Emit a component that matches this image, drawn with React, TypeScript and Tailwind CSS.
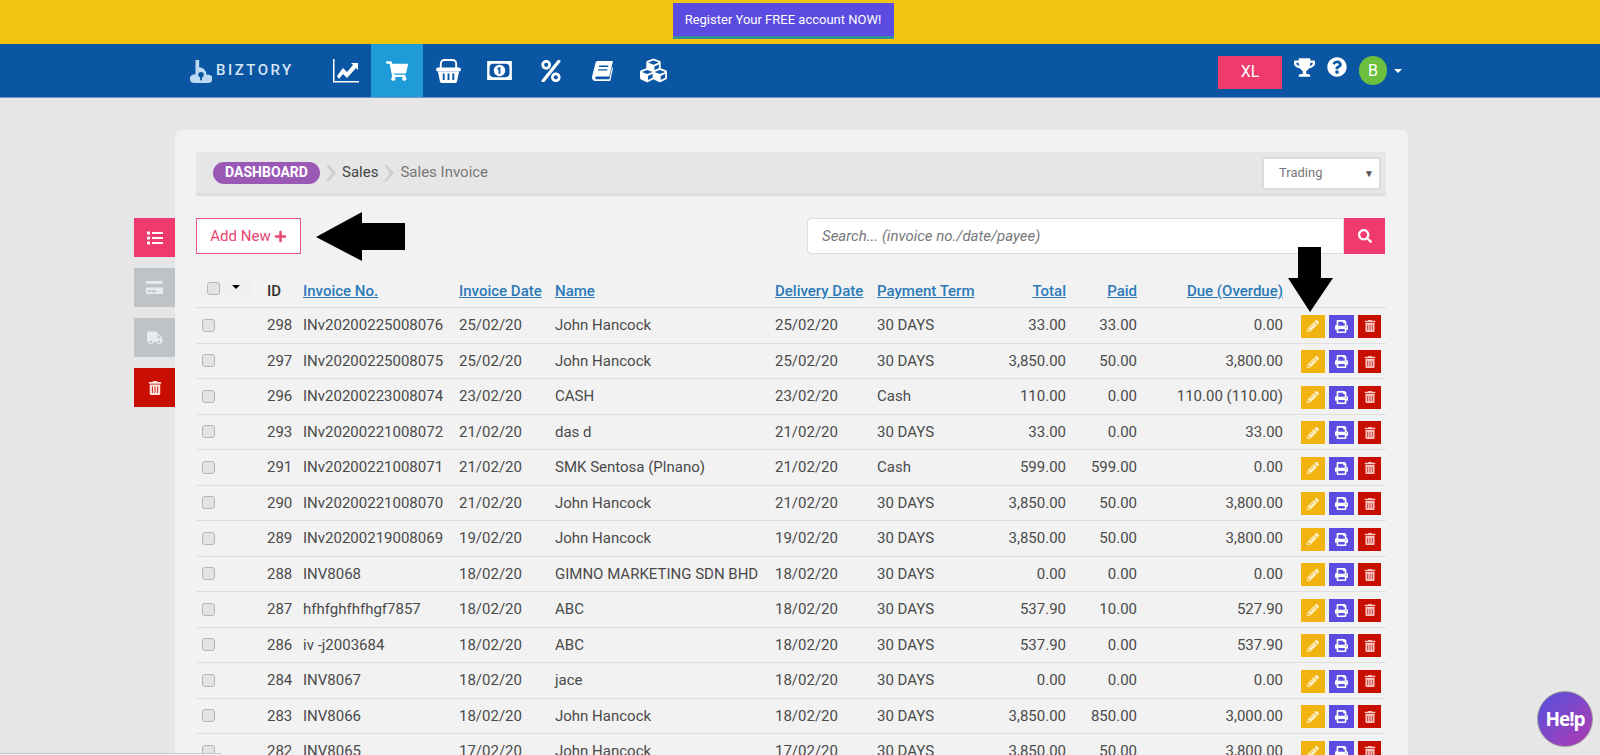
import React from 'react';
import {
  FaCreditCard,
  FaCubes,
  FaList,
  FaPencilAlt,
  FaPercent,
  FaPlus,
  FaPrint,
  FaQuestionCircle,
  FaSearch,
  FaShoppingCart,
  FaTrashAlt,
  FaTrophy,
  FaTruck,
} from 'react-icons/fa';

const rows = [
  ['298', 'INv20200225008076', '25/02/20', 'John Hancock', '25/02/20', '30 DAYS', '33.00', '33.00', '0.00'],
  ['297', 'INv20200225008075', '25/02/20', 'John Hancock', '25/02/20', '30 DAYS', '3,850.00', '50.00', '3,800.00'],
  ['296', 'INv20200223008074', '23/02/20', 'CASH', '23/02/20', 'Cash', '110.00', '0.00', '110.00 (110.00)'],
  ['293', 'INv20200221008072', '21/02/20', 'das d', '21/02/20', '30 DAYS', '33.00', '0.00', '33.00'],
  ['291', 'INv20200221008071', '21/02/20', 'SMK Sentosa (Plnano)', '21/02/20', 'Cash', '599.00', '599.00', '0.00'],
  ['290', 'INv20200221008070', '21/02/20', 'John Hancock', '21/02/20', '30 DAYS', '3,850.00', '50.00', '3,800.00'],
  ['289', 'INv20200219008069', '19/02/20', 'John Hancock', '19/02/20', '30 DAYS', '3,850.00', '50.00', '3,800.00'],
  ['288', 'INV8068', '18/02/20', 'GIMNO MARKETING SDN BHD', '18/02/20', '30 DAYS', '0.00', '0.00', '0.00'],
  ['287', 'hfhfghfhfhgf7857', '18/02/20', 'ABC', '18/02/20', '30 DAYS', '537.90', '10.00', '527.90'],
  ['286', 'iv -j2003684', '18/02/20', 'ABC', '18/02/20', '30 DAYS', '537.90', '0.00', '537.90'],
  ['284', 'INV8067', '18/02/20', 'jace', '18/02/20', '30 DAYS', '0.00', '0.00', '0.00'],
  ['283', 'INV8066', '18/02/20', 'John Hancock', '18/02/20', '30 DAYS', '3,850.00', '850.00', '3,000.00'],
  ['282', 'INV8065', '17/02/20', 'John Hancock', '17/02/20', '30 DAYS', '3,850.00', '50.00', '3,800.00'],
];

const gridCols = 'grid grid-cols-[66px_36px_156px_96px_220px_102px_128px_71px_71px_146px_98px]';

function Checkbox() {
  return <span className="block w-[13px] h-[13px] rounded-[3px] bg-[#e4e4e4] border border-[#b5b5b5]" />;
}

function SortLink({ label, right }: { label: string; right?: boolean }) {
  return (
    <a className={`text-[#2b7ab8] font-medium underline ${right ? 'text-right pr-[5px]' : 'pl-[5px]'}`}>{label}</a>
  );
}

function Chevron() {
  return (
    <svg viewBox="0 0 10 16" className="w-[10px] h-[16px] mx-[6px] text-[#cfcfcf]" fill="currentColor">
      <path d="M0 0h3l7 8-7 8H0l6-8z" />
    </svg>
  );
}

function LogoMark() {
  return (
    <svg viewBox="0 0 24 26" className="w-[22px] h-[24px] text-[#bcd9f2]" fill="currentColor">
      <path d="M6 1h4v8a8 8 0 0 1 8 8h2a4.500 4.500 0 0 1 0 9H4a4.500 4.500 0 0 1-1-8.800l3-1z" />
      <circle cx="12" cy="17" r="3" fill="#0a56a3" />
      <path d="M11 18h2v5h-2z" fill="#0a56a3" />
    </svg>
  );
}

function ChartIcon() {
  return (
    <svg viewBox="0 0 26 24" className="w-[26px] h-[24px]" fill="currentColor">
      <path d="M0 0h1.500v22H26v1.500H0z" />
      <path d="M4 17l6-8 4 4 6-7-2-2h7v7l-2-2-9 10-4-4-4 5z" />
    </svg>
  );
}

function BasketIcon() {
  return (
    <svg viewBox="0 0 26 26" className="w-[25px] h-[25px]" fill="currentColor">
      <path d="M5 11V6a4 4 0 0 1 4-4h8a4 4 0 0 1 4 4v5" fill="none" stroke="currentColor" strokeWidth="2" />
      <rect x="0" y="10" width="26" height="4" rx="2" />
      <path d="M2 14h22l-2 10a2 2 0 0 1-2 2H6a2 2 0 0 1-2-2z" />
      <path d="M7 16h2v7H7zM12 16h2v7h-2zM17 16h2v7h-2z" fill="#0a56a3" />
    </svg>
  );
}

function MoneyIcon() {
  return (
    <svg viewBox="0 0 26 20" className="w-[25px] h-[19px]" fill="currentColor">
      <rect width="26" height="20" />
      <rect x="2.500" y="3" width="21" height="14" rx="4" fill="#0a56a3" />
      <circle cx="13" cy="10" r="6" />
      <path d="M12 6.500h2v7h-2zM10.800 7.500l1.500-1v2l-1.500.6z" fill="#0a56a3" />
    </svg>
  );
}

function BookIcon() {
  return (
    <svg viewBox="0 0 24 24" className="w-[22px] h-[22px]" fill="currentColor">
      <path d="M7 1h17l-4 17H6.500c-2.500 0-2.500 3 0 3H20l3-13 1 1-3 14H5.500C2 23 .5 20.500 1.300 17.500L5 3c.3-1.200 1-2 2-2z" />
      <path d="M9 6h10l-.4 1.500H8.600zM8 10h10l-.4 1.500H7.600z" fill="#0a56a3" />
    </svg>
  );
}

export default function App() {
  return (
    <div className="relative h-[755px] overflow-hidden bg-[#e6e6e6] text-[15px] text-[#4a4a4a] font-['Roboto',sans-serif]">
      {/* promo banner */}
      <div className="h-[44px] bg-[#f2c40f] flex justify-center pt-[3px] pr-[34px]">
        <button className="h-[36px] w-[221px] bg-[#5b4be0] border-b-[3px] border-[#2f8f9f] text-white text-[13px]">
          Register Your FREE account NOW!
        </button>
      </div>

      {/* nav */}
      <div className="h-[54px] bg-[#0a56a3] border-b border-[#6d96c6] flex items-center pl-[190px] text-white">
        <div className="w-[130px] flex items-center gap-[4px]">
          <LogoMark />
          <span className="text-[15px] font-medium tracking-[2.5px] text-[#d3e5f5]">BIZTORY</span>
        </div>
        <div className="flex h-full">
          <a className="w-[51.3px] flex items-center justify-center"><ChartIcon /></a>
          <a className="w-[51.3px] flex items-center justify-center bg-[#1f9cd8]"><FaShoppingCart size={22} /></a>
          <a className="w-[51.3px] flex items-center justify-center"><BasketIcon /></a>
          <a className="w-[51.3px] flex items-center justify-center"><MoneyIcon /></a>
          <a className="w-[51.3px] flex items-center justify-center"><FaPercent size={22} /></a>
          <a className="w-[51.3px] flex items-center justify-center"><BookIcon /></a>
          <a className="w-[51.3px] flex items-center justify-center"><FaCubes size={27} /></a>
        </div>
        <div className="ml-auto flex items-center mr-[198px]">
          <button className="w-[64px] h-[33px] mt-[3px] bg-[#ee3a6c] text-[16px]">XL</button>
          <FaTrophy size={21} className="ml-[12px] -mt-[7px]" />
          <FaQuestionCircle size={20} className="ml-[12px] -mt-[7px]" />
          <span className="ml-[12px] w-[28px] h-[29px] rounded-full bg-[#6abf3e] flex items-center justify-center text-[16px]">B</span>
          <span className="ml-[7px] border-x-[4px] border-t-[4px] border-x-transparent border-t-white" />
        </div>
      </div>

      <div className="flex pl-[134px] pt-[32px]">
        {/* side actions */}
        <div className="w-[41px] mt-[88px] flex flex-col gap-[11px] text-white">
          <a className="h-[39px] bg-[#ee3a6c] flex items-center justify-center"><FaList size={16} /></a>
          <a className="h-[39px] bg-[#bdc3c7] flex items-center justify-center text-[#e8eaeb]"><FaCreditCard size={17} /></a>
          <a className="h-[39px] bg-[#bdc3c7] flex items-center justify-center text-[#e8eaeb]"><FaTruck size={16} /></a>
          <a className="h-[39px] bg-[#c80e00] flex items-center justify-center text-[#fbe3e0]"><FaTrashAlt size={14} /></a>
        </div>

        <div className="w-[1233px] bg-[#f2f2f2] rounded-[6px] pl-[21px] pr-[22px] pt-[22px] pb-[40px]">
          {/* breadcrumb */}
          <div className="h-[44px] bg-[#e6e6e6] rounded-[3px] border-b-[3px] border-[#dcdcdc] flex items-center pl-[17px] pr-[5px]">
            <span className="h-[22px] w-[107px] rounded-full bg-[#9b59b6] text-white text-[14px] font-bold flex items-center justify-center">DASHBOARD</span>
            <Chevron />
            <span className="text-[#444]">Sales</span>
            <Chevron />
            <span className="text-[#777]">Sales Invoice</span>
            <div className="ml-auto mt-[1px] w-[119px] h-[33px] bg-white rounded-[3px] border-2 border-[#dcdcdc] flex items-center justify-between pl-[15px] pr-[5px] text-[13px] text-[#777]">
              Trading
              <span className="text-[10px] text-[#555]">▼</span>
            </div>
          </div>

          {/* toolbar */}
          <div className="mt-[22px] flex justify-between pr-[1px]">
            <button className="w-[105px] h-[36px] bg-white border border-[#e8557f] text-[#e8456f] flex items-center justify-center gap-[3px]">
              Add New <FaPlus size={13} />
            </button>
            <div className="flex w-[578px] h-[36px]">
              <div className="flex-1 bg-white rounded-l-[4px] border border-[#dcdcdc] flex items-center pl-[14px] italic text-[#777]">
                Search... (invoice no./date/payee)
              </div>
              <button className="w-[41px] bg-[#ee3a6c] text-white flex items-center justify-center"><FaSearch size={14} /></button>
            </div>
          </div>

          {/* invoices */}
          <div className="mt-[21px]">
            <div className={`${gridCols} h-[33px] items-center border-b border-[#dcdcdc]`}>
              <div className="flex items-center h-[24px] w-[52px] ml-[4px] -mt-[6px] bg-[#f0f0f0] pl-[7px]">
                <Checkbox />
                <span className="ml-[12px] -mt-[3px] border-x-[4px] border-t-[4px] border-x-transparent border-t-black" />
              </div>
              <span className="pl-[5px] font-medium text-[#333]">ID</span>
              <SortLink label="Invoice No." />
              <SortLink label="Invoice Date" />
              <SortLink label="Name" />
              <SortLink label="Delivery Date" />
              <SortLink label="Payment Term" />
              <SortLink label="Total" right />
              <SortLink label="Paid" right />
              <SortLink label="Due (Overdue)" right />
              <span />
            </div>
            {rows.map((r) => (
              <div key={r[0]} className={`${gridCols} h-[35.5px] items-center border-b border-[#dedede]`}>
                <span className="pl-[6px]"><Checkbox /></span>
                <span className="pl-[5px]">{r[0]}</span>
                <span className="pl-[5px]">{r[1]}</span>
                <span className="pl-[5px]">{r[2]}</span>
                <span className="pl-[5px] whitespace-nowrap">{r[3]}</span>
                <span className="pl-[5px]">{r[4]}</span>
                <span className="pl-[5px]">{r[5]}</span>
                <span className="pr-[5px] text-right">{r[6]}</span>
                <span className="pr-[5px] text-right">{r[7]}</span>
                <span className="pr-[5px] text-right">{r[8]}</span>
                <span className="pl-[13px] mt-[2px] flex gap-[4px] text-white">
                  <a className="w-[24px] h-[23px] bg-[#f0b30f] flex items-center justify-center text-[#fdf0c8]"><FaPencilAlt size={12} /></a>
                  <a className="w-[25px] h-[23px] bg-[#5b4be0] flex items-center justify-center"><FaPrint size={13} /></a>
                  <a className="w-[23px] h-[23px] bg-[#c80e00] flex items-center justify-center text-[#f6c9c5]"><FaTrashAlt size={12} /></a>
                </span>
              </div>
            ))}
          </div>
        </div>
      </div>

      {/* annotation arrows */}
      <svg viewBox="0 0 90 50" className="absolute left-[316px] top-[212px] w-[90px] h-[50px]" fill="black">
        <path d="M0 25 46 0V11H89V38H46V49Z" />
      </svg>
      <svg viewBox="0 0 45 67" className="absolute left-[1288px] top-[246px] w-[45px] h-[67px]" fill="black">
        <path d="M10 1H33V32H45L22 66 0 32H10Z" />
      </svg>

      {/* help bubble */}
      <div className="absolute left-[1537px] top-[691px] w-[56px] h-[56px] rounded-full border border-[#999] bg-gradient-to-br from-[#4f4be0] to-[#b033b0] flex items-center justify-center text-white text-[19px] font-bold tracking-[-1px] font-['Open_Sans',sans-serif]">
        He!p
      </div>

      {/* strip along the bottom edge */}
      <div className="absolute left-0 bottom-0 w-[222px] h-[2px] bg-[#f5f5f5] border-t border-[#c8c8c8] rounded-tr-[6px]" />
    </div>
  );
}
